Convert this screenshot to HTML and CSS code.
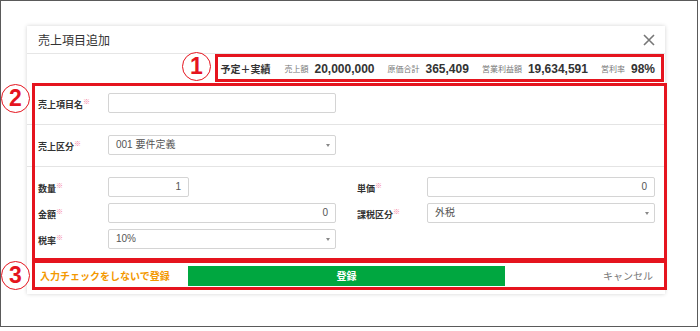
FILE: index.html
```html
<!DOCTYPE html>
<html lang="ja">
<head>
  <meta charset="UTF-8" />
  <title>売上項目追加</title>
  <link rel="stylesheet" href="styles.css">
</head>
<body>
  <div class="frame">
    <div class="modal">
      <div class="modal-header">
        <span class="title">売上項目追加</span>
        <svg class="close" width="12" height="12" viewBox="0 0 12 12"><path d="M1 1L11 11M11 1L1 11" stroke="#777" stroke-width="1.6" fill="none"/></svg>
      </div>

      <div class="summary">
        <span class="sum-head">予定＋実績</span>
        <span class="sum-label">売上額</span><span class="sum-val">20,000,000</span>
        <span class="sum-label">原価合計</span><span class="sum-val">365,409</span>
        <span class="sum-label">営業利益額</span><span class="sum-val">19,634,591</span>
        <span class="sum-label">営利率</span><span class="sum-val last">98%</span>
      </div>

      <div class="row">
        <label class="lbl">売上項目名<sup>※</sup></label>
        <div class="field"></div>
      </div>

      <div class="row">
        <label class="lbl">売上区分<sup>※</sup></label>
        <div class="field select">001 要件定義<span class="caret"></span></div>
      </div>

      <div class="row grid">
        <label class="lbl">数量<sup>※</sup></label>
        <div class="field num short">1</div>
        <span></span>
        <label class="lbl">単価<sup>※</sup></label>
        <div class="field num">0</div>

        <label class="lbl">金額<sup>※</sup></label>
        <div class="field num">0</div>
        <span></span>
        <label class="lbl">課税区分<sup>※</sup></label>
        <div class="field select">外税<span class="caret"></span></div>

        <label class="lbl">税率<sup>※</sup></label>
        <div class="field select">10%<span class="caret"></span></div>
      </div>

      <div class="footer">
        <span class="skip">入力チェックをしないで登録</span>
        <button class="submit">登録</button>
        <span class="cancel">キャンセル</span>
      </div>
    </div>

    <!-- annotations -->
    <div class="mark box1"></div>
    <div class="mark box2"></div>
    <div class="mark box3"></div>
    <div class="num-circle c1">1</div>
    <div class="num-circle c2">2</div>
    <div class="num-circle c3">3</div>
  </div>
</body>
</html>
```

FILE: styles.css
```css
body {
  margin: 0;
  background: #fff;
  font-family: "Liberation Sans", "Noto Sans CJK JP", sans-serif;
  color: #333;
}
.frame {
  position: relative;
  width: 698px;
  height: 327px;
  border: 1px solid #5a5a5a;
  box-sizing: border-box;
  padding-top: 25px;
  padding-left: 26px;
}
.modal {
  width: 638px;
  background: #fff;
  box-shadow: 0 0 4px rgba(0, 0, 0, 0.18);
  padding-bottom: 4px;
}
.modal-header {
  height: 27px;
  border-bottom: 1px solid #e6e6e6;
  display: flex;
  align-items: center;
  justify-content: space-between;
  padding: 0 10px 0 11px;
}
.title {
  font-size: 12px;
  color: #333;
}
.summary {
  height: 29px;
  display: flex;
  align-items: center;
  justify-content: flex-end;
  padding-right: 10px;
}
.sum-head {
  font-size: 10px;
  font-weight: bold;
  margin-right: 14px;
}
.sum-label {
  font-size: 8px;
  color: #777;
  margin-right: 6px;
}
.sum-val {
  font-size: 12px;
  font-weight: bold;
  margin-right: 13px;
}
.sum-val.last {
  margin-right: 0;
}
.row {
  display: flex;
  align-items: center;
  padding: 10px 10px 11px 11px;
  border-bottom: 1px solid #e4e4e4;
}
.row.grid {
  display: grid;
  grid-template-columns: 70px 228px 21px 70px 228px;
  row-gap: 6px;
  border-bottom: none;
  padding-bottom: 12px;
}
.lbl {
  width: 70px;
  font-size: 9px;
  font-weight: bold;
  color: #333;
}
.lbl sup {
  font-size: 7px;
  color: #f47ea0;
  font-weight: normal;
}
.field {
  position: relative;
  width: 228px;
  height: 20px;
  box-sizing: border-box;
  border: 1px solid #d4d4d4;
  border-radius: 2px;
  font-size: 10px;
  color: #555;
  line-height: 18px;
  padding: 0 7px;
}
.field.num {
  text-align: right;
}
.field.short {
  width: 81px;
}
.caret {
  position: absolute;
  right: 5px;
  top: 8px;
  border-left: 2.5px solid transparent;
  border-right: 2.5px solid transparent;
  border-top: 3px solid #888;
}
.footer {
  display: flex;
  align-items: center;
  height: 29px;
  padding: 0 12px 0 13px;
}
.skip {
  font-size: 10px;
  font-weight: bold;
  color: #f39800;
  width: 148px;
}
.submit {
  width: 317px;
  height: 20px;
  border: none;
  background: #00a740;
  color: #fff;
  font-weight: bold;
  font-size: 10px;
  font-family: inherit;
}
.cancel {
  margin-left: auto;
  font-size: 10px;
  color: #777;
}
.mark {
  position: absolute;
  border: 3px solid #e5141e;
}
.box1 { left: 214px; top: 53px; width: 443px; height: 22px; }
.box2 { left: 31px; top: 82px; width: 629px; height: 172px; }
.box3 { left: 31px; top: 259px; width: 629px; height: 24px; }
.num-circle {
  position: absolute;
  width: 27px;
  height: 27px;
  border: 1px solid #e5141e;
  border-radius: 50%;
  background: #fff;
  color: #e5141e;
  font-size: 23px;
  font-weight: bold;
  text-align: center;
  line-height: 27px;
}
.c1 { left: 181px; top: 51px; }
.c2 { left: 0; top: 83px; }
.c3 { left: 0; top: 260px; }
```
